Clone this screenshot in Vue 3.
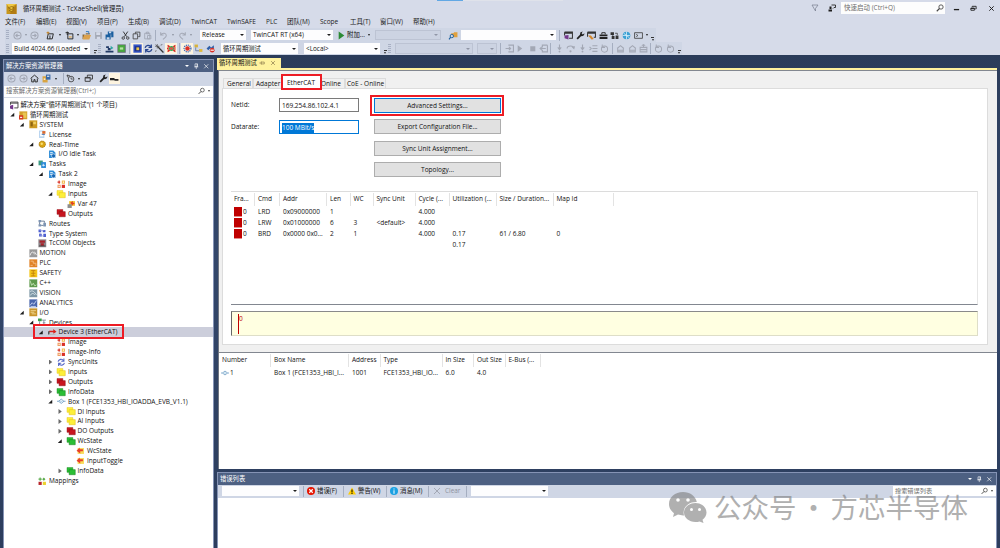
<template>
  <div class="shell">
    <header class="top">
      <div class="progress"><i></i><b></b></div>
      <div class="title-bar">
        <svg class="logo" viewBox="0 0 16 16" v-html="icons.cube"></svg>
        <span class="title-text">循环周期测试 <em>- TcXaeShell(</em>管理员<em>)</em></span>
        <svg class="ico filter" viewBox="0 0 16 16" v-html="icons.filter"></svg>
        <svg class="ico feedback" viewBox="0 0 16 16" v-html="icons.feedback"></svg>
        <div class="quick">
          <span>快速启动 (Ctrl+Q)</span>
          <svg class="ico" viewBox="0 0 16 16" v-html="icons.search"></svg>
        </div>
        <svg class="ico win" viewBox="0 0 16 16" v-html="icons.min"></svg>
        <svg class="ico win" viewBox="0 0 16 16" v-html="icons.restore"></svg>
        <svg class="ico win" viewBox="0 0 16 16" v-html="icons.close"></svg>
      </div>
      <nav class="menu">
        <span v-for="m in menus" :key="m[0]" :style="{ width: m[1] + 'px' }">{{ m[0] }}</span>
      </nav>
      <div v-for="(bar, bi) in toolbars" :key="bi" class="toolbar" :class="'toolbar-' + bi">
        <div
          v-for="(c, ci) in bar"
          :key="ci"
          class="cell"
          :class="[c[0], c[3]]"
          :style="{ width: c[1] + 'px' }"
        >
          <svg v-if="c[0] === 'ic'" viewBox="0 0 16 16" v-html="icons[c[2]]"></svg>
          <template v-else>{{ c[2] }}</template>
        </div>
      </div>
    </header>

    <main class="work">
      <aside class="explorer">
        <div class="pane-title">
          <span>解决方案资源管理器</span>
          <i class="tri"></i>
          <svg class="ico" viewBox="0 0 16 16" v-html="icons.pin"></svg>
          <svg class="ico" viewBox="0 0 16 16" v-html="icons.x"></svg>
        </div>
        <div class="pane-tools">
          <div v-for="(c, ci) in paneTools" :key="ci" class="cell" :class="[c[0], c[3]]" :style="{ width: c[1] + 'px' }">
            <svg v-if="c[0] === 'ic'" viewBox="0 0 16 16" v-html="icons[c[2]]"></svg>
          </div>
        </div>
        <div class="pane-search">
          <span>搜索解决方案资源管理器(Ctrl+;)</span>
          <svg class="ico" viewBox="0 0 16 16" v-html="icons.search"></svg>
          <i class="tri dark"></i>
        </div>
        <div class="tree">
          <div
            v-for="(n, i) in tree"
            :key="i"
            class="node"
            :class="{ selected: n[4], cjk: i < 2 }"
            :style="{ paddingLeft: 9.5 * n[0] - 8 + 'px' }"
          >
            <span class="arrow" :class="n[1]"></span>
            <svg class="ico" viewBox="0 0 16 16" v-html="icons[n[2]]"></svg>
            <span class="label">{{ n[3] }}</span>
            <span v-if="n[4]" class="mark mark-device"></span>
          </div>
        </div>
      </aside>

      <section class="right">
        <div class="doc-tabs">
          <div class="doc-tab">
            <span>循环周期测试</span>
            <svg class="ico" viewBox="0 0 16 16" v-html="icons.pinside"></svg>
            <svg class="ico" viewBox="0 0 16 16" v-html="icons.x"></svg>
          </div>
        </div>
        <div class="doc">
          <div class="tabs">
            <span class="tab t-general">General</span>
            <span class="tab t-adapter">Adapter</span>
            <span class="tab active">EtherCAT<span class="mark mark-tab"></span></span>
            <span class="tab t-online">Online</span>
            <span class="tab t-coe">CoE - Online</span>
          </div>
          <div class="page">
            <div class="form">
              <div class="fields">
                <div class="field">
                  <label>NetId:</label>
                  <div class="input">169.254.86.102.4.1</div>
                </div>
                <div class="field">
                  <label>Datarate:</label>
                  <div class="input focus"><span>100 MBit/s</span></div>
                </div>
              </div>
              <div class="buttons">
                <div class="btn primary">Advanced Settings...<span class="mark mark-btn"></span></div>
                <div class="btn">Export Configuration File...</div>
                <div class="btn">Sync Unit Assignment...</div>
                <div class="btn">Topology...</div>
              </div>
            </div>
            <div class="frames">
              <div class="row head">
                <span v-for="c in frameCols" :key="c[0]" :style="{ width: c[1] + 'px' }">{{ c[0] }}</span>
              </div>
              <div v-for="(r, ri) in frameRows" :key="ri" class="row">
                <span v-for="(c, ci) in frameCols" :key="ci" :style="{ width: c[1] + 'px' }">
                  <i v-if="ci === 0 && r[0]" class="red"></i>{{ r[ci] }}
                </span>
              </div>
            </div>
            <div class="timeline"><i></i><span>0</span></div>
          </div>
          <div class="boxes">
            <div class="row head">
              <span v-for="c in boxCols" :key="c[0]" :style="{ width: c[1] + 'px' }">{{ c[0] }}</span>
            </div>
            <div class="row">
              <span v-for="(c, ci) in boxCols" :key="ci" :style="{ width: c[1] + 'px' }">
                <svg v-if="ci === 0" class="ico" viewBox="0 0 16 16" v-html="icons.box"></svg>{{ boxRow[ci] }}
              </span>
            </div>
          </div>
        </div>

        <div class="errors">
          <div class="pane-title">
            <span>错误列表</span>
            <i class="tri"></i>
            <svg class="ico" viewBox="0 0 16 16" v-html="icons.pin"></svg>
            <svg class="ico" viewBox="0 0 16 16" v-html="icons.x"></svg>
          </div>
          <div class="error-tools">
            <div v-for="(c, ci) in errorTools" :key="ci" class="cell" :class="[c[0], c[3]]" :style="{ width: c[1] + 'px' }">
              <svg v-if="c[0] === 'ic'" viewBox="0 0 16 16" v-html="icons[c[2]]"></svg>
              <template v-else>{{ c[2] }}</template>
            </div>
            <div class="error-search">
              <span>搜索错误列表</span>
              <svg class="ico" viewBox="0 0 16 16" v-html="icons.search"></svg>
              <i class="tri dark"></i>
            </div>
          </div>
        </div>
      </section>
    </main>

    <div class="watermark">
      <svg viewBox="0 0 38 31">
        <path fill-rule="evenodd" d="M14 0C6 0 0 5.200 0 12c0 3.800 2 7 5 9.200L4 25l5-2.400c1.700.5 3.200.8 5 .8h1C13 16 19 10 27 10h.8C26.500 4 21 0 14 0zM9 6.200a1.800 1.800 0 1 1 0 3.600 1.800 1.800 0 0 1 0-3.600zm10 0a1.800 1.800 0 1 1 0 3.600 1.800 1.800 0 0 1 0-3.600z" />
        <path fill-rule="evenodd" d="M26.500 11C20 11 15 15.300 15 20.600S20 30 26.500 30c1.500 0 2.800-.2 4-.6L34.500 31l-1-3.200c2.500-1.700 4-4.300 4-7.200 0-5.300-4.700-9.600-11-9.600zM22.500 16a1.500 1.500 0 1 1 0 3 1.500 1.500 0 0 1 0-3zm8 0a1.500 1.500 0 1 1 0 3 1.500 1.500 0 0 1 0-3z" />
      </svg>
      <span class="wm">公众号</span><span class="wm wm-dot">·</span><span class="wm">方芯半导体</span>
    </div>
  </div>
</template>

<script setup>
// square tile used by the top-level TwinCAT nodes
const tile = (bg, mark) => `<rect x="0.500" y="0.500" width="15" height="15" fill="${bg}"/><path d="M0.500 15.500V0.500H15.500" fill="none" stroke="#fff" stroke-opacity=".4"/>${mark}`
// two overlapping folders, as on Inputs / Outputs / InfoData
const pair = (a, b) => `<path d="M0 1h11v9H0z" fill="${a}" stroke="${b}" stroke-width=".8"/><path d="M4 5h11.500v9.500H4z" fill="${a}" stroke="${b}"/>`
const line = (d, c = '#1e1e1e', w = 1.6) => `<path d="${d}" fill="none" stroke="${c}" stroke-width="${w}"/>`
const fill = (d, c = '#1e1e1e') => `<path d="${d}" fill="${c}"/>`
const G = '#a3a8b5'

const icons = {
  cube: '<rect width="16" height="16" fill="#c7961b"/><path d="M0 0h16L5 6z" fill="#efc846"/><path d="M16 0v16L5 16z" fill="#b37c14"/><path d="M3 6l5-2 4 2-4 3zM4 10l4 2 4-3" fill="#e8bf3a" stroke="#7a5409"/>',
  filter: line('M2 2h12l-5 7v5l-3-5z', '#6f7686', 1.3),
  feedback: line('M7 2h8v5h-3l-2 2', '#1e1e1e', 1.7) + fill('M1 11h7v4H1zM3 5h4v5H3z'),
  search: '<circle cx="10" cy="6" r="4.300" fill="none" stroke="#444" stroke-width="1.700"/>' + line('M7 9L1.500 14.500', '#444', 2.2),
  min: fill('M2 9h12v3H2z'),
  restore: line('M5 5V3h9v6h-2', '#1e1e1e', 2) + line('M2 7h8v5H2zM2 8h8', '#1e1e1e', 2),
  close: line('M3 3l10 10M13 3L3 13', '#1e1e1e', 2.2),
  x: line('M3 3l10 10M13 3L3 13', 'currentColor', 1.6),
  pin: line('M5 2h6v7H5zM3 9.500h10M8 10v5M10 2v7', 'currentColor', 1.5),
  pinside: line('M1 8h5M6 4v8M6 5.500h8v5H6', 'currentColor', 1.5),
  back: '<circle cx="8" cy="8" r="6.300" fill="none" stroke="#a3a8b5" stroke-width="1.900"/>' + line('M12 8H5M8 5L5 8l3 3', G, 1.9),
  fwd: '<circle cx="8" cy="8" r="6.300" fill="none" stroke="#a3a8b5" stroke-width="1.900"/>' + line('M4 8h7M8 5l3 3-3 3', G, 1.9),
  newproj: line('M4 5h9l-2 9H2zM7 8v6') + line('M1 3h5M3.500 1v5', '#c27d1a'),
  additem: line('M5 5h9v9H5z') + line('M1 3h6M4 1v6', '#1e1e1e') + fill('M7 9h5v3H7z', '#dcb67a'),
  open: fill('M1 6h5l1-2h7v2H5L2 14H1z', '#8d6a38') + fill('M4 7h12l-3 8H1z', '#dca24d') + line('M7 1h5v4', '#2b78c4'),
  save: fill('M2 2h12v12H2z', G) + fill('M4 2h7v5H4zM5 10h6v4H5z', '#d6dbe9'),
  saveall: fill('M5 1h10v10H5zM1 6h9v9H1z', '#1b5f9f') + fill('M7 1h4v3H7zM3 11h5v4H3z', '#cbd8ea') + line('M10.500 6v5', '#cfd6e5', 1),
  cut: line('M4 1l6 9M12 1L6 10M4 1v0', '#333', 1.7) + '<circle cx="4" cy="12.500" r="2.200" fill="none" stroke="#333" stroke-width="1.500"/><circle cx="12" cy="12.500" r="2.200" fill="none" stroke="#333" stroke-width="1.500"/>',
  copy: line('M6 5V2h8v8h-3M2 5h8v9H2z', '#444', 1.5),
  paste: line('M3 4h9v10H3zM6 2h4v3H6zM8 8h6v6H8z', G),
  undo: line('M3 2v5h5M3 7c4-5 10-3 10 1 0 3-3 4-6 7', G, 1.8),
  redo: line('M13 2v5H8M13 7C9 2 3 4 3 8c0 3 3 4 6 7', G, 1.8),
  play: fill('M3 1l10 7-10 7z', '#2b8a34'),
  find: fill('M4 4h4l1-2h6v9H4z', '#e0a03d') + '<circle cx="5" cy="9" r="3" fill="#cfd6e5" stroke="#1b5f9f" stroke-width="1.600"/>' + line('M3 11l-3 4', '#1b5f9f', 2),
  winvs: line('M1 2h14v11H9M1 2v6M1 4h14', '#333', 1.8) + fill('M1 8l7-1v8l-7-2z', '#74388c'),
  wrench: line('M2 14l7-7', '#222', 3.2) + fill('M8 2l4-1-2 3 2 2 3-2c0 4-3 6-7 5L7 6z', '#222'),
  winorg: line('M1 2h14v9h-3M1 2v8M1 4h14', '#333', 1.8) + fill('M2 8h5l5 6-4 1z', '#d4872b'),
  toolbox: fill('M1 6h14v3H1zM1 10h14v4H1z', '#222') + line('M5 6V3h6v3', '#222'),
  blocks: fill('M1 2h6v5H1zM3 9h5v5H3zM10 8h5v6h-5z', '#333') + line('M9 4h4v3M5 7v3', '#333', 1.3),
  globe: '<circle cx="8" cy="8" r="6.800" fill="#3aa0d4"/>' + line('M1 8h13M8 1v14M3 4l10 8', '#d9eef9', 1.4),
  cmd: line('M1 3h14v10H1zM4 6l3 2-3 2', '#444', 1.5),
  steps: fill('M2 4h5v3H2zM5 7h5v4H5zM1 12h14v3H1z', '#233a66') + fill('M10 3l5 4-5 3z', '#2fa7a2'),
  chip: tile('#5c6570', fill('M2 2h12v12H2z', '#48a83e') + fill('M5 6h6v4H5z', '#b5e2a2')),
  chipblue: tile('#3556c6', fill('M3 4h10v9H3z', '#1b2f8c') + fill('M6 6h5v5H6z', '#eac54a')),
  sync: line('M2 7c1-5 8-6 10-2M13 1v5H8', '#27458f', 2.2) + line('M14 9c-1 5-8 6-10 2M3 15v-5h5', '#27458f', 2.2),
  magic: line('M5 5l10 10', '#333', 2.2) + line('M4 0v8M0 4h8M1 1l6 6M10 2l3-1M2 11l-1 3', '#444', 1.2),
  netred: '<circle cx="8" cy="8" r="4.500" fill="#35a853"/>' + line('M1 2l4 3M15 2l-4 3M1 14l4-3M15 14l-4-3M1 8H0M2 4v8M14 4v8', '#d93025', 2) + fill('M5 6h6v4H5z', '#e2574c'),
  gearred: '<circle cx="8" cy="8" r="6" fill="none" stroke="#3d67b5" stroke-width="2.500" stroke-dasharray="2 1.500"/><circle cx="8" cy="8" r="4" fill="#d93025"/>',
  topo: fill('M1 1h6v5H1z', '#d8b33a') + fill('M9 9h6v5H9z', '#e0b93b') + line('M3 6v6h6', '#6a7da4', 1.6),
  nolink: fill('M1 8l5-5 3 3-5 5zM7 8l7-6v6z', '#2e5fa8') + '<circle cx="11" cy="11" r="4.200" fill="#d93025"/>' + fill('M8 10h6v2H8z', '#fff'),
  dIn: line('M6 2h9v12H6M1 8h9M7 5l3 3-3 3', G, 2),
  dPlay: fill('M3 2l8 6-8 6z', G),
  dStop: fill('M4 4h9v9H4z', G),
  dOut: line('M15 2H6v4M6 10v4h9V2M12 8H2M5 5L2 8l3 3', G, 2),
  dUp: line('M8 1v9M5 6l3 4 3-4', G, 2) + '<circle cx="8" cy="13.500" r="1.700" fill="#a3a8b5"/>',
  dOver: line('M2 8c0-6 12-6 12 0M11 5l3 3 1-4', G, 2) + '<circle cx="8" cy="13" r="1.900" fill="#a3a8b5"/>',
  dList: line('M6 3h9M6 8h9M6 13h9M1 5l3 3-3 3', G, 2),
  dRing: '<circle cx="8" cy="9" r="5.500" fill="none" stroke="#a3a8b5" stroke-width="1.800"/>' + line('M4 1v5h5', G, 1.8),
  dHome: line('M2 8l6-5 6 5M3 8v6h10V8M2 11h12', G, 1.8),
  dBox: line('M2 6h12v8H2zM2 10h12M8 6V1M5 3l3-2 3 2', G, 1.8),
  home: line('M1 8l7-6 7 6M3 8v6h4v-4h2v4h4V8', '#2b2b2b', 1.7),
  sln: fill('M1 4h9v11H1z', '#d9a441') + fill('M7 1h8v9H7z', '#3a6aa8') + fill('M9 3h4v2H9zM3 8h3v2H3z', '#fff'),
  clock: '<circle cx="9" cy="9" r="5" fill="none" stroke="#3c3c3c" stroke-width="1.500"/>' + line('M9 6v3h3M1 3h6M3 1v5', '#3c3c3c', 1.4),
  stack: line('M6 5V2h9v7h-3M2 6h9v7H2zM2 7h9', '#333', 1.6),
  dash: fill('M0 7h8v4H0zM8 9h7v3H8z', '#222'),
  vsln: line('M1 2h14v11H8M1 2v5M1 4h14', '#444', 1.8) + fill('M0 9l6-2v9l-6-2z', '#74388c'),
  project: tile('#d3a02c', fill('M7 3h7v10H7z', '#e8c553') + fill('M0 8h8v8H0z', '#d33a25') + fill('M2 11h4v2H2z', '#fff')),
  system: tile('#cc9a22', fill('M3 4h4v8H3z', '#8d6412') + fill('M8 3h5v5H8z', '#f0cf63')),
  license: fill('M2 1h10v14H2z', '#b6d3ef') + fill('M4 3h6v9H4z', '#fff') + fill('M7 7h6v2H7z', '#3a6aa8') + fill('M8 2h6v5H8z', '#dc6c2f'),
  realtime: '<circle cx="8" cy="8" r="6" fill="#d9a514" stroke="#9c6d0b" stroke-width="1.500" stroke-dasharray="2.500 1"/><circle cx="7" cy="7" r="2.300" fill="#f8dd74"/>',
  task: fill('M2 1h8l4 4v10H2z', '#2d8bd6') + fill('M4 4h5v2H4zM4 8h8v1.500H4z', '#fff') + '<circle cx="10.500" cy="11" r="3.800" fill="#1565b3" stroke="#fff"/>',
  tasks: fill('M1 1h8v9H1z', '#3c9a84') + fill('M6 4h9v11H6z', '#2d8bd6') + line('M10 7v5M8 10h5', '#fff', 1.4),
  image: fill('M1 3h5v2H1zM3 1h2v6H3z', '#d93025') + fill('M9 1h6v6H9z', '#f2b74a') + fill('M1 9h6v6H1z', '#f0995c') + fill('M9 9h6v6H9z', '#d93025') + fill('M3 11h2v2H3zM11 3h2v2h-2z', '#fff'),
  yellow: pair('#fdf03a', '#e3bf14'),
  redf: pair('#c9151f', '#8c0d14'),
  green: pair('#2bbf35', '#16801e'),
  varx: fill('M4 2h11v9H4z', '#f4c52b') + fill('M1 8h8v7H1z', '#8d8d8d') + fill('M6 5l5-3v3h3v3h-3v3z', '#e13d24'),
  state: fill('M3 2h12v11H3z', '#f9dc58') + fill('M1 7l6-6v3h6v4H8v4z', '#e8402a'),
  routes: fill('M1 2h5v4H1zM1 10h5v4H1zM10 7h5v7h-5z', '#7d94b3') + line('M6 4h6v3M6 12h4M3 6v4', '#44597a', 1.4),
  types: fill('M1 1h5v5H1zM9 2h5v4H9zM2 9h5v5H2zM10 9h5v6h-5z', '#4a5bd0') + line('M3 3h9M4 7v6h8', '#8d96d8', 1.3),
  tccom: tile('#8b8488', fill('M3 3h10v4H3zM5 8h6v5H5z', '#a8232b') + line('M2 13h12', '#444')),
  motion: tile('#9a9a9a', line('M2 12c2-8 7-8 8-2M10 5l4 6', '#f2f2f2', 1.7)),
  plc: tile('#e08326', line('M3 4h5v4h5v5M3 12h4', '#f8c48c', 1.5)),
  safety: tile('#f5c518', line('M4 3h8M4 8h8M4 13h8M8 3v10', '#c27f08', 1.6)),
  cpp: tile('#5f9a4c', line('M2 3l3 9 3-4 3 5 3-2', '#cfe8c2', 1.5)),
  vision: tile('#7e98a6', line('M2 5c4-4 9 1 12 6M3 12c1-4 5-5 8-1', '#e7f0f4', 1.5)),
  analytics: tile('#4a66ac', line('M2 12l4-5 3 3 5-7M3 14h10', '#dce5fa', 1.5)),
  io: tile('#c9952b', line('M3 5h10M3 8h7M5 11h8', '#f7e2a2', 1.5)),
  devices: fill('M0 1h7v5H0z', '#3ba048') + line('M3 6v8h4M11 4v11M7 4h8M9 9h5', '#6e8094', 1.5),
  device: fill('M2 5h8V2l6 5-6 4V8H2z', '#d9201a') + fill('M0 6h3v6H0z', '#555') + fill('M2 11h12v2H2z', '#b9b9b9'),
  treesync: line('M2 7c1-5 8-6 10-2M13 1v5H8', '#5668c6', 2) + line('M14 9c-1 5-8 6-10 2M3 15v-5h5', '#5668c6', 2),
  box: line('M0 8h3l5-4 5 4h3M3 8l5 4 5-4', '#5f93bd', 1.5) + fill('M6 7h4v2H6z', '#a6cde6'),
  mappings: fill('M1 3h6v2H1zM3 1h2v6H3zM8 4l3-3 3 3-3 3z', '#5aab4a') + fill('M1 9h6v6H1z', '#b8252b') + fill('M9 9h6v6H9z', '#ecd22e'),
  err: '<circle cx="8" cy="8" r="8" fill="#e51400"/>' + line('M4.500 4.500l7 7M11.500 4.500l-7 7', '#fff', 2.4),
  warn: fill('M8 1l8 14H0z', '#ffcc00') + fill('M7 5h2v6H7zM7 12h2v2H7z', '#000'),
  info: '<circle cx="8" cy="8" r="8" fill="#1ba1e2"/>' + fill('M7 3h2v2H7zM7 6.500h2v7H7z', '#fff'),
  clear: line('M2 2l12 12M14 2L2 14', G, 2),
}

const menus = [
  ['文件(F)', 31], ['编辑(E)', 30], ['视图(V)', 31], ['项目(P)', 31], ['生成(B)', 31],
  ['调试(D)', 32], ['TwinCAT', 36], ['TwinSAFE', 39], ['PLC', 21], ['团队(M)', 33],
  ['Scope', 30], ['工具(T)', 30], ['窗口(W)', 33], ['帮助(H)', 30],
]

// [kind, width, icon or text, modifier]
const toolbars = [
  [
    ['grip', 5], ['ic', 12, 'back'], ['caret', 5, '', 'off'], ['ic', 12, 'fwd'], ['gap', 4],
    ['ic', 12, 'newproj'], ['caret', 7], ['ic', 12, 'additem'], ['caret', 5], ['ic', 12, 'open'],
    ['ic', 12, 'save'], ['ic', 11, 'saveall'], ['gap', 4], ['ic', 12, 'cut'], ['ic', 11, 'copy'],
    ['ic', 11, 'paste'], ['sep', 4], ['ic', 13, 'undo'], ['caret', 6, '', 'off'], ['ic', 12, 'redo'],
    ['caret', 6, '', 'off'], ['gap', 6], ['combo', 46, 'Release'], ['gap', 5], ['combo', 82, 'TwinCAT RT (x64)'],
    ['gap', 3], ['ic', 10, 'play'], ['gap', 1], ['txt', 18, '附加...'], ['caret', 8], ['gap', 2],
    ['combo', 66, '', 'off'], ['gap', 6], ['ic', 12, 'find'], ['gap', 2], ['combo', 95, ''],
    ['sep', 6], ['ic', 12, 'winvs'], ['ic', 12, 'wrench'], ['ic', 11, 'winorg'], ['ic', 12, 'toolbox'],
    ['ic', 11, 'blocks'], ['ic', 12, 'globe'], ['ic', 12, 'cmd'], ['caret', 6], ['more', 5],
  ],
  [
    ['grip', 5], ['gap', 1], ['combo', 78, 'Build 4024.66 (Loaded'], ['gap', 2], ['more', 6],
    ['grip', 5], ['ic', 12, 'steps'], ['ic', 12, 'chip'], ['sep', 4], ['ic', 12, 'chipblue', 'on'],
    ['ic', 11, 'sync'], ['ic', 11, 'magic'], ['ic', 12, 'netred', 'on'], ['sep', 4], ['ic', 12, 'gearred', 'on'],
    ['ic', 11, 'topo'], ['ic', 12, 'nolink'], ['gap', 5], ['combo', 77, '循环周期测试', 'cn'], ['gap', 6],
    ['combo', 76, '<Local>'], ['gap', 2], ['more', 6], ['grip', 5], ['gap', 2],
    ['combo', 78, '', 'off'], ['gap', 4], ['combo', 20, '', 'off'], ['sep', 7], ['ic', 11, 'dIn'],
    ['ic', 11, 'dPlay'], ['ic', 12, 'dStop'], ['ic', 10, 'dOut'], ['sep', 5], ['ic', 12, 'dUp'],
    ['ic', 11, 'dOver'], ['ic', 12, 'dUp'], ['ic', 10, 'dList'], ['ic', 12, 'dRing'], ['sep', 5],
    ['ic', 11, 'dHome'], ['ic', 12, 'dHome'], ['ic', 10, 'dBox'], ['sep', 4], ['ic', 12, 'dRing'],
    ['ic', 12, 'dRing'], ['more', 6],
  ],
]

const paneTools = [
  ['ic', 12, 'back'], ['ic', 12, 'fwd'], ['ic', 11, 'home'], ['ic', 13, 'sln'], ['caret', 6],
  ['gap', 2], ['sep', 4], ['ic', 11, 'clock'], ['caret', 5], ['ic', 14, 'stack'], ['gap', 2],
  ['ic', 12, 'wrench'], ['ic', 11, 'dash', 'on'],
]

const errorTools = [
  ['combo', 77, ''], ['sep', 8], ['ic', 8, 'err'], ['gap', 2], ['txt', 23, '错误(F)'],
  ['sep', 6], ['gap', 1], ['ic', 9, 'warn'], ['gap', 2], ['txt', 26, '警告(W)'],
  ['sep', 5], ['ic', 9, 'info'], ['gap', 2], ['txt', 27, '消息(M)'],
  ['sep', 3], ['gap', 2], ['ic', 9, 'clear'], ['gap', 4], ['txt', 18, 'Clear', 'off'],
  ['sep', 6], ['gap', 2], ['combo', 77, ''],
]

// [indent, arrow, icon, label, selected]
const tree = [
  [1, '', 'vsln', '解决方案"循环周期测试"(1 个项目)'],
  [2, 'open', 'project', '循环周期测试'],
  [3, 'open', 'system', 'SYSTEM'],
  [4, '', 'license', 'License'],
  [4, 'open', 'realtime', 'Real-Time'],
  [5, '', 'task', 'I/O Idle Task'],
  [4, 'open', 'tasks', 'Tasks'],
  [5, 'open', 'task', 'Task 2'],
  [6, '', 'image', 'Image'],
  [6, 'open', 'yellow', 'Inputs'],
  [7, '', 'varx', 'Var 47'],
  [6, '', 'redf', 'Outputs'],
  [4, '', 'routes', 'Routes'],
  [4, '', 'types', 'Type System'],
  [4, '', 'tccom', 'TcCOM Objects'],
  [3, '', 'motion', 'MOTION'],
  [3, '', 'plc', 'PLC'],
  [3, '', 'safety', 'SAFETY'],
  [3, '', 'cpp', 'C++'],
  [3, '', 'vision', 'VISION'],
  [3, '', 'analytics', 'ANALYTICS'],
  [3, 'open', 'io', 'I/O'],
  [4, 'open', 'devices', 'Devices'],
  [5, 'open', 'device', 'Device 3 (EtherCAT)', true],
  [6, '', 'image', 'Image'],
  [6, '', 'image', 'Image-Info'],
  [6, 'shut', 'treesync', 'SyncUnits'],
  [6, 'shut', 'yellow', 'Inputs'],
  [6, 'shut', 'redf', 'Outputs'],
  [6, 'shut', 'green', 'InfoData'],
  [6, 'open', 'box', 'Box 1 (FCE1353_HBI_IOADDA_EVB_V1.1)'],
  [7, 'shut', 'yellow', 'DI Inputs'],
  [7, 'shut', 'yellow', 'AI Inputs'],
  [7, 'shut', 'redf', 'DO Outputs'],
  [7, 'open', 'green', 'WcState'],
  [8, '', 'state', 'WcState'],
  [8, '', 'state', 'InputToggle'],
  [7, 'shut', 'green', 'InfoData'],
  [4, '', 'mappings', 'Mappings'],
]

const frameCols = [
  ['Fra...', 24], ['Cmd', 25], ['Addr', 47], ['Len', 23.5], ['WC', 23],
  ['Sync Unit', 42], ['Cycle (...', 34], ['Utilization (...', 47], ['Size / Duration...', 57], ['Map Id', 60],
]
const frameRows = [
  ['0', 'LRD', '0x09000000', '1', '', '', '4.000'],
  ['0', 'LRW', '0x01000000', '6', '3', '<default>', '4.000'],
  ['0', 'BRD', '0x0000 0x0...', '2', '1', '', '4.000', '0.17', '61 / 6.80', '0'],
  ['', '', '', '', '', '', '', '0.17'],
]

const boxCols = [
  ['Number', 52], ['Box Name', 78], ['Address', 31.5], ['Type', 62], ['In Size', 31.5], ['Out Size', 31.5], ['E-Bus (...', 35.5],
]
const boxRow = ['1', 'Box 1 (FCE1353_HBI_I...', '1001', 'FCE1353_HBI_IO...', '6.0', '4.0', '']
</script>

<style>
html,
body {
  margin: 0;
  height: 100%;
  overflow: hidden;
}
</style>

<style scoped>
.shell {
  position: relative;
  width: 1000px;
  height: 548px;
  overflow: hidden;
  display: flex;
  flex-direction: column;
  background: linear-gradient(#293955, #33476b 45%, #2c3d5d);
  font-family: "Open Sans", "Noto Sans CJK SC", sans-serif;
  font-size: 6.5px;
  line-height: 10px;
  color: #111;
  white-space: nowrap;
}
.shell * { box-sizing: border-box; }
svg { display: block; flex: none; overflow: visible; }
.ico { width: 8px; height: 8px; }
em { font-style: normal; font-size: 6.9px; }

.top { height: 55px; flex: none; background: #d6dbe9; }
.progress { display: flex; height: 1px; padding-left: 437px; }
.progress i { width: 26px; background: #62a8e4; }
.progress b { width: 100px; background: #dfe2ea; }
.title-bar { display: flex; align-items: center; height: 14px; padding-left: 6px; }
.logo { width: 11px; height: 10px; margin: 2px 6px 0 0; }
.title-text { font-size: 6.3px; width: 788px; padding-top: 2px; }
.filter { margin-right: 9px; }
.feedback { margin-right: 5px; }
.quick {
  display: flex;
  align-items: center;
  justify-content: space-between;
  width: 104px;
  height: 12px;
  padding: 0 1px 0 3px;
  background: #fdfdfd;
  color: #6d6d6d;
  font-size: 6.5px;
}
.win { width: 7px; height: 7px; margin-left: 7.500px; }
.win + .win { margin-left: 10.500px; }
.menu { display: flex; height: 13px; padding: 2px 0 0 5px; font-size: 6.5px; color: #222; }
.menu span { flex: none; }

.toolbar { display: flex; align-items: center; height: 14px; margin-left: 5px; padding-left: 1px; background: #cfd6e5; }
.toolbar-0 { width: 651px; }
.toolbar-1 { width: 677px; height: 13px; }
.cell { flex: none; display: flex; align-items: center; justify-content: center; height: 11px; }
.cell svg { width: 9px; height: 9px; }
.cell.on { background: #fdf4e0; }
.txt { justify-content: flex-start; font-size: 6.4px; overflow: visible; }
.txt.off { color: #8d929e; }
.grip {
  justify-content: flex-start;
  height: 10px;
  background: repeating-linear-gradient(#9aa3b8 0 1px, transparent 1px 2px) 0 0 / 3px 10px no-repeat;
  opacity: 0.75;
}
.sep::before { content: ""; width: 1px; height: 11px; background: #a5aec0; }
.caret::before, .tri {
  content: "";
  border: 1.500px solid transparent;
  border-top: 2px solid #1e1e1e;
  border-bottom: 0;
}
.caret.off::before { border-top-color: #8d93a0; }
.more { flex-direction: column; justify-content: flex-end; }
.more::before { content: ""; width: 3px; height: 1px; background: #333; margin-bottom: 1px; }
.more::after { content: ""; border: 1.500px solid transparent; border-top: 2px solid #333; border-bottom: 0; }
.combo {
  justify-content: space-between;
  padding: 0 2px;
  height: 10.500px;
  background: #fdfdfe;
  overflow: hidden;
  font-size: 6.4px;
}
.combo.cn { font-size: 6.3px; }
.combo::after { content: ""; margin-left: auto; border: 2px solid transparent; border-top: 2px solid #1e1e1e; border-bottom: 0; }
.combo.off { background: #ccd3e2; border: 1px solid #bcc3d3; }
.combo.off::after { border-top-color: #9096a6; }

.work { display: flex; flex: 1; min-height: 0; padding: 0 3px; }
.explorer {
  width: 211px;
  margin-top: 4px;
  flex: none;
  display: flex;
  flex-direction: column;
  border: 1px solid #8593b5;
  border-bottom: 0;
  background: #fff;
}
.pane-title {
  display: flex;
  align-items: center;
  height: 11.500px;
  flex: none;
  padding: 0 4px 0 2px;
  background: #4d6082;
  color: #fff;
  font-size: 6.3px;
}
.pane-title span { flex: 1; }
.pane-title .ico { width: 6.500px; height: 6.500px; margin-left: 3px; }
.tri { width: 0; height: 0; border-left-width: 2px; border-right-width: 2px; border-top-color: #fff; margin-right: 1px; }
.tri.dark { border-top-color: #444; border-left-width: 1.500px; border-right-width: 1.500px; }
.pane-tools { display: flex; align-items: center; height: 14px; flex: none; background: #cfd6e5; padding-left: 1px; }
.pane-search {
  display: flex;
  align-items: center;
  height: 12px;
  flex: none;
  padding: 0 2px;
  font-size: 6.4px;
  color: #6d6d6d;
  border-bottom: 1px solid #d5d9e3;
}
.pane-search span { flex: 1; }
.pane-search .ico { width: 7px; margin-right: 3px; }

.tree { padding-top: 2.500px; }
.node { position: relative; display: flex; align-items: center; height: 9.900px; font-size: 6.5px; }
.node .ico { margin: 0 2.500px 0 2px; width: 8.500px; height: 8.500px; }
.node.cjk { font-size: 6.35px; }
.node.selected { background: #cccedb; }
.arrow { width: 5px; height: 5px; flex: none; margin-left: -5px; margin-right: 4px; }
.arrow.open { clip-path: polygon(85% 10%, 85% 85%, 5% 85%); background: #1e1e1e; }
.arrow.shut { clip-path: polygon(20% 0, 85% 50%, 20% 100%); background: #6a6a6a; }
.node .arrow + .ico { margin-left: 0; }
.mark { position: absolute; border: 2px solid #ed1c24; pointer-events: none; }
.mark-device { left: 29px; top: -3px; width: 91px; height: 15px; z-index: 2; }

.right { flex: 1; min-width: 0; margin-left: 3px; display: flex; flex-direction: column; }
.doc-tabs { height: 15px; flex: none; padding-top: 3px; border-bottom: 2px solid #fff29d; }
.doc-tab {
  display: flex;
  align-items: center;
  width: 64px;
  height: 10px;
  padding-left: 2px;
  background: #fff29d;
  font-size: 6.3px;
}
.doc-tab span { width: 42px; }
.doc-tab .ico { width: 6px; height: 6px; margin-right: 5px; color: #75633d; }
.doc {
  height: 399px;
  flex: none;
  margin-left: 1px;
  display: flex;
  flex-direction: column;
  background: #f0f0f0;
  border-top: 1px solid #828790;
  border-left: 1px solid #6e7480;
}
.tabs { display: flex; align-items: flex-end; height: 17px; padding-left: 4px; flex: none; }
.tab {
  height: 10px;
  padding-left: 3px;
  border: 1px solid #dcdcdc;
  border-bottom: 0;
  background: #f0f0f0;
  line-height: 10px;
}
.t-general { width: 30px; }
.t-adapter { width: 29px; padding-left: 2px; }
.t-online { width: 24px; padding-left: 0; border-left: 0; }
.t-coe { width: 41px; padding-left: 1px; }
.tab.active { position: relative; width: 39px; height: 13px; padding: 1.500px 0 0 4px; background: #fff; }
.mark-tab { left: -2px; top: -2px; width: 41px; height: 16px; }
.page {
  height: 257px;
  flex: none;
  margin: 0 9px 0 3px;
  padding: 9px 8px 0 8px;
  background: #fff;
  border: 1px solid #dcdcdc;
}
.form { display: flex; height: 93px; }
.fields { width: 143px; }
.field { display: flex; align-items: center; height: 14px; margin-bottom: 8px; }
.field label { width: 48px; }
.input { width: 80px; height: 14px; padding: 1px 2px; border: 1px solid #7a7a7a; line-height: 11px; }
.input.focus { border-color: #0078d7; }
.input.focus span { display: inline-block; height: 9.500px; line-height: 9.500px; background: #0078d7; color: #fff; }
.buttons { display: flex; flex-direction: column; gap: 6.300px; width: 127px; }
.btn {
  position: relative;
  height: 15px;
  border: 1px solid #adadad;
  background: #e1e1e1;
  text-align: center;
  line-height: 13px;
}
.btn.primary { border: 1.500px solid #0078d7; }
.mark-btn { left: -5px; top: -4px; width: 134px; height: 21px; }
.frames { width: 747px; height: 114px; border-top: 1px solid #dcdcdc; border-bottom: 1px solid #828790; border-right: 1px solid #e6e6e6; }
.row { display: flex; height: 11px; align-items: center; }
.row span { flex: none; display: flex; align-items: center; height: 11px; padding-left: 3px; }
.row.head { height: 14px; }
.row.head span { height: 13px; border-right: 1px solid #e3e3e3; }
.red { width: 8px; height: 9px; margin-right: 1px; background: #c00000; border-bottom: 1px solid #e58a8a; box-sizing: content-box; }
.timeline {
  display: flex;
  width: 747px;
  height: 25px;
  margin-top: 6px;
  padding: 2px 0 0 6px;
  background: #ffffe1;
  border: 1px solid #dedec8;
  border-top: 1.500px solid #8a8a8a;
  border-left: 1px solid #666;
  color: #c00000;
}
.timeline i { width: 1px; height: 20px; background: #c00000; }
.boxes { flex: 1; margin-top: 7px; background: #fff; border-top: 1.500px solid #828790; }
.boxes .ico { margin-right: 1px; width: 8px; margin-left: -1px; }

.errors {
  flex: 1;
  margin-top: 3px;
  display: flex;
  flex-direction: column;
  background: #fff;
  border: 1px solid #8593b5;
  border-bottom: 0;
}
.error-tools { display: flex; align-items: center; height: 13px; flex: none; padding-left: 4px; background: #cfd6e5; }
.error-tools .cell svg { width: 8px; height: 8px; }
.error-tools .combo { height: 10px; }
.error-search {
  display: flex;
  align-items: center;
  width: 103px;
  height: 10px;
  margin-left: auto;
  padding: 0 2px;
  background: #fff;
  color: #6d6d6d;
  font-size: 6.2px;
}
.error-search span { flex: 1; }
.error-search .ico { width: 7px; margin-right: 3px; }

.watermark {
  position: absolute;
  left: 669px;
  top: 491px;
  display: flex;
  align-items: center;
  height: 32px;
  font-family: "Noto Sans CJK SC", sans-serif;
  font-size: 27.500px;
  line-height: 32px;
  color: #808080;
  opacity: 0.62;
}
.watermark svg { width: 38px; height: 31px; fill: #808080; margin-right: 7px; }
.wm { height: 34px; }
.wm-dot { width: 34px; text-align: center; }
</style>
